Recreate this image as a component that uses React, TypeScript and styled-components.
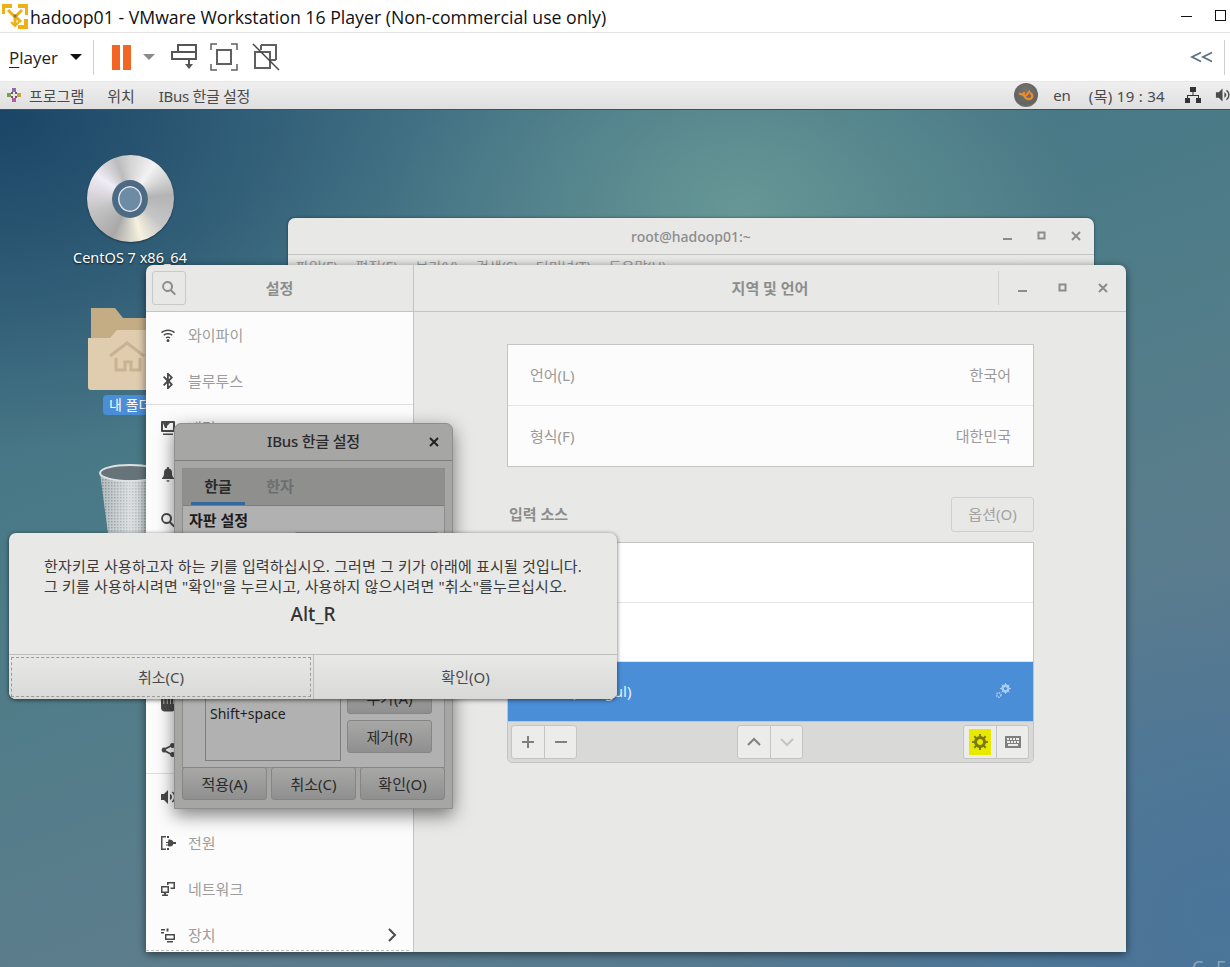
import React from 'react';
import styled, { createGlobalStyle } from 'styled-components';

const GlobalStyle = createGlobalStyle`
  html, body { margin: 0; padding: 0; background: #fff; }
  * { box-sizing: border-box; }
  body { font-family: "Noto Sans", "Noto Sans CJK KR", sans-serif; font-size: 15px; }
`;

const Page = styled.div`
  width: 1230px;
  height: 967px;
  display: flex;
  flex-direction: column;
  overflow: hidden;
`;

/* vmware player chrome */
const TitleBar = styled.div`
  height: 33px;
  flex: none;
  display: flex;
  align-items: center;
  background: #fff;
  border-bottom: 1px solid #e3e3e3;
  padding: 0 3px 0 2px;
  color: #101010;
`;
const TitleText = styled.span`
  font-family: "Open Sans", "Noto Sans", sans-serif;
  font-size: 17.7px;
  margin-left: 2px;
  padding-top: 1px;
  flex: 1;
  white-space: nowrap;
`;
const Toolbar = styled.div`
  height: 49px;
  flex: none;
  display: flex;
  align-items: center;
  background: #fff;
  padding-left: 9px;
  border-bottom: 1px solid #e6e6e6;
`;
const PlayerMenu = styled.span`
  font-family: "Open Sans", "Noto Sans", sans-serif;
  font-size: 17px;
  color: #222;
  width: 60px;
  u { text-underline-offset: 3px; text-decoration-thickness: 1px; }
`;
const ToolSep = styled.span<{ $ml: number }>`
  width: 1px;
  height: 35px;
  background: #cfcfcf;
  margin-left: ${(p) => p.$ml}px;
`;
const Caret = styled.span<{ $color: string; $ml: number }>`
  width: 0;
  height: 0;
  border-left: 6px solid transparent;
  border-right: 6px solid transparent;
  border-top: 6px solid ${(p) => p.$color};
  margin-left: ${(p) => p.$ml}px;
`;
const PauseBars = styled.span`
  display: flex;
  gap: 3px;
  margin-left: 18px;
  i { width: 8px; height: 25px; background: #f26522; display: block; }
`;
const ToolIcon = styled.svg<{ $ml: number }>`
  margin-left: ${(p) => p.$ml}px;
  flex: none;
`;
const ToolSpacer = styled.span`
  flex: 1;
`;
const ToolEnd = styled.span`
  width: 5px;
  flex: none;
`;

const GuestPanel = styled.div`
  height: 28px;
  flex: none;
  display: flex;
  align-items: center;
  padding: 0 0 1px 6px;
  background: linear-gradient(#efefef, #dfdfdf);
  border-bottom: 1px solid #4c4c4c;
  font-size: 15px;
  color: #4a4a4a;
  white-space: nowrap;
`;
const PanelItem = styled.span<{ $ml: number; $track?: number }>`
  margin-left: ${(p) => p.$ml}px;
  letter-spacing: ${(p) => p.$track ?? 0}px;
  flex: none;
  display: flex;
`;
const SoundClip = styled(PanelItem)`
  width: 15px;
  overflow: hidden;
`;
const PanelGrow = styled.span`
  flex: 1;
`;
const PanelBadge = styled.span`
  width: 24px;
  height: 24px;
  border-radius: 50%;
  background: radial-gradient(circle at 50% 35%, #77736d 0, #636360 65%, #8a8a88 100%);
  display: flex;
  align-items: center;
  justify-content: center;
  flex: none;
`;

/* guest desktop */
const Desktop = styled.div`
  flex: 1;
  position: relative;
  overflow: hidden;
  background:
    radial-gradient(ellipse 340px 260px at 740px 100px, rgba(104, 153, 150, 0.95), rgba(104, 153, 150, 0) 100%),
    radial-gradient(ellipse 420px 340px at 0px 0px, #1b4566 0%, rgba(27, 69, 102, 0) 100%),
    radial-gradient(ellipse 500px 400px at 1230px 800px, #4a7499, rgba(74, 116, 153, 0) 100%),
    linear-gradient(160deg, #3c6b82 0%, #4d7c88 40%, #5d7d8c 70%, #4f7793 100%);
`;
const DesktopIcons = styled.div`
  width: 130px;
  margin-left: 65px;
  padding-top: 45px;
  display: flex;
  flex-direction: column;
  align-items: center;
`;
const Disc = styled.div`
  width: 87px;
  height: 87px;
  border-radius: 50%;
  background: conic-gradient(#d4d4d4 0deg, #f3f3f3 35deg, #b4b4b4 85deg, #c6c6c6 130deg, #f6f1df 165deg, #a9a9a9 205deg, #c2c2c2 250deg, #f1ecf6 305deg, #bcbcbc 340deg, #d4d4d4 360deg);
  display: flex;
  align-items: center;
  justify-content: center;
  box-shadow: 0 1px 2px rgba(0, 0, 0, 0.4);
`;
const DiscHub = styled.div`
  width: 36px;
  height: 36px;
  border-radius: 50%;
  background: #e9e9e9;
  display: flex;
  align-items: center;
  justify-content: center;
  &::before {
    content: '';
    display: block;
    width: 26px;
    height: 26px;
    border-radius: 50%;
    border: 6px solid #4d6a84;
    background: #6d8ba5;
    box-shadow: inset 0 0 0 1.5px #dfe6ec;
  }
`;
const IconLabel = styled.div`
  color: #fff;
  font-size: 14.5px;
  line-height: 20px;
  margin-top: 5px;
  text-shadow: 0 1px 2px rgba(0, 0, 0, 0.8);
  white-space: nowrap;
`;
const FolderIcon = styled.svg`
  margin-top: 41px;
  align-self: flex-start;
  margin-left: 23px;
`;
const FolderLabel = styled.div`
  align-self: flex-start;
  margin: 5px 0 0 38px;
  padding: 0 6px;
  width: 90px;
  height: 20px;
  border-radius: 4px;
  background: #4a8ed8;
  color: #fff;
  font-size: 14px;
  line-height: 20px;
`;
const TrashIcon = styled.svg`
  margin-top: 49px;
  align-self: flex-start;
  margin-left: 34px;
`;
const CornerText = styled.div`
  position: absolute;
  left: 1192px;
  top: 845px;
  font-size: 18px;
  line-height: 24px;
  letter-spacing: 4px;
  color: rgba(255, 255, 255, 0.35);
  white-space: nowrap;
`;

/* terminal behind everything */
const TerminalWindow = styled.div`
  position: absolute;
  left: 288px;
  top: 108px;
  width: 806px;
  height: 70px;
  background: #e8e8e7;
  border-radius: 7px 7px 0 0;
  box-shadow: 0 0 3px rgba(0, 0, 0, 0.5);
`;
const TerminalHead = styled.div`
  height: 37px;
  display: flex;
  align-items: center;
  justify-content: flex-end;
  position: relative;
  border-bottom: 1px solid #c4c4c2;
  padding-right: 13px;
  color: #8c8c8c;
  font-size: 14px;
`;
const TerminalTitle = styled.span`
  position: absolute;
  left: 0;
  right: 0;
  text-align: center;
  font-weight: 500;
`;
const TerminalMenu = styled.div`
  display: flex;
  gap: 18px;
  padding: 3px 0 0 8px;
  font-size: 14px;
  line-height: 18px;
  color: #9a9a9a;
  background: linear-gradient(#e8e8e7, #dcdcdb);
  height: 33px;
`;
const WindowButtons = styled.div<{ $gap: number }>`
  display: flex;
  align-items: center;
  gap: ${(p) => p.$gap}px;
  position: relative;
`;

/* settings window */
const SettingsWindow = styled.div`
  position: absolute;
  left: 146px;
  top: 155px;
  width: 980px;
  height: 687px;
  display: grid;
  grid-template-columns: 268px 1fr;
  grid-template-rows: 47px 1fr;
  background: #e8e8e7;
  border-radius: 7px 7px 0 0;
  box-shadow: 0 2px 8px rgba(0, 0, 0, 0.55);
  overflow: hidden;
`;
const SideHead = styled.div`
  display: flex;
  align-items: center;
  padding-left: 6px;
  border-right: 1px solid #c4c4c2;
  border-bottom: 1px solid #c4c4c2;
  position: relative;
`;
const SearchToggle = styled.div`
  width: 34px;
  height: 34px;
  border: 1px solid #c9c9c7;
  border-radius: 3px;
  display: flex;
  align-items: center;
  justify-content: center;
`;
const SideTitle = styled.div`
  position: absolute;
  left: 0;
  right: 0;
  text-align: center;
  font-weight: 700;
  color: #8c8c8c;
  padding-bottom: 2px;
`;
const MainHead = styled.div`
  display: flex;
  align-items: center;
  border-bottom: 1px solid #c4c4c2;
  position: relative;
  justify-content: flex-end;
`;
const HeadControls = styled.div`
  height: 34px;
  display: flex;
  align-items: center;
  border-left: 1px solid #d0d0ce;
  padding: 0 18px 0 19px;
  position: relative;
`;
const Sidebar = styled.div`
  background: #fcfcfc;
  border-right: 1px solid #c4c4c2;
  position: relative;
  overflow: hidden;
`;
const SideGroup = styled.div`
  border-bottom: 1px solid #dedede;
`;
const SideRow = styled.div`
  height: 46px;
  display: flex;
  align-items: center;
  padding: 0 0 1px 14px;
  gap: 12px;
  color: #9d9d9d;
`;
const SideIcon = styled.span`
  width: 16px;
  height: 16px;
  display: flex;
  flex: none;
`;
const SideArrow = styled.span`
  margin-left: auto;
  margin-right: 16px;
  display: flex;
`;
const DashedEdge = styled.div`
  position: absolute;
  left: 0;
  right: 4px;
  bottom: 1px;
  border-bottom: 1px dashed #bdbdbd;
`;
const MainPane = styled.div`
  padding: 32px 92px 0 93px;
  display: flex;
  flex-direction: column;
`;
const ListBox = styled.div`
  background: #fcfcfc;
  border: 1px solid #c4c4c2;
`;
const InfoRow = styled.div`
  height: 60px;
  display: flex;
  align-items: center;
  justify-content: space-between;
  padding: 0 22px 2px;
  color: #9a9a9a;
  & + & { border-top: 1px solid #e4e4e4; height: 61px; }
`;
const SourceHead = styled.div`
  margin-top: 29px;
  height: 36px;
  display: flex;
  align-items: center;
  justify-content: space-between;
  padding-left: 2px;
  font-weight: 700;
  color: #8c8c8c;
`;
const OptionButton = styled.div`
  width: 83px;
  height: 35px;
  border: 1px solid #cfcfcd;
  border-radius: 3px;
  display: flex;
  align-items: center;
  justify-content: center;
  padding-bottom: 2px;
  font-weight: 400;
  color: #a3a3a3;
`;
const SourceLabel = styled.span`
  padding-bottom: 2px;
`;
const SourceBox = styled.div`
  margin-top: 10px;
  border: 1px solid #c4c4c2;
  border-radius: 0 0 5px 5px;
  overflow: hidden;
`;
const SourceRow = styled.div<{ $active?: boolean }>`
  height: ${(p) => (p.$active ? 60 : 59)}px;
  display: flex;
  align-items: center;
  justify-content: space-between;
  padding: 0 22px 2px 18px;
  background: ${(p) => (p.$active ? '#4a8ed8' : '#fff')};
  color: ${(p) => (p.$active ? '#e6f0fa' : '#9a9a9a')};
  & + & { border-top: 1px solid #e4e4e4; }
`;
const SourceTools = styled.div`
  height: 41px;
  display: flex;
  align-items: center;
  justify-content: space-between;
  padding: 0 4px 0 3px;
  background: #d9d9d7;
  border-top: 1px solid #c4c4c2;
`;
const ToolGroup = styled.div`
  display: flex;
  height: 34px;
  border: 1px solid #c4c4c2;
  border-radius: 3px;
  background: #ececeb;
  overflow: hidden;
`;
const ToolCell = styled.div`
  width: 32px;
  display: flex;
  align-items: center;
  justify-content: center;
  color: #8a8a8a;
  & + & { border-left: 1px solid #c4c4c2; }
`;
const Highlight = styled.span`
  width: 22px;
  height: 26px;
  margin-right: 1px;
  background: #e9e900;
  display: flex;
  align-items: center;
  justify-content: center;
`;

/* ibus setup, dimmed behind the key dialog */
const ImeDialog = styled.div`
  position: absolute;
  left: 174px;
  top: 313px;
  width: 279px;
  height: 386px;
  background: #a6a6a5;
  border: 1px solid #8e8e8e;
  border-radius: 7px 7px 0 0;
  box-shadow: 0 6px 18px rgba(0, 0, 0, 0.5);
  padding-bottom: 8px;
  display: flex;
  flex-direction: column;
  color: #1c1c1c;
`;
const ImeHead = styled.div`
  height: 37px;
  flex: none;
  display: flex;
  align-items: center;
  justify-content: center;
  position: relative;
  font-weight: 500;
  padding-bottom: 3px;
  letter-spacing: -0.2px;
  border-bottom: 1px solid #7d7d7d;
  color: #2a2a2a;
`;
const ImeClose = styled.svg`
  position: absolute;
  right: 13px;
  top: 13px;
`;
const Notebook = styled.div`
  margin: 7px 7px 0;
  flex: 1;
  display: flex;
  flex-direction: column;
  border: 1px solid #8c8c8c;
  background: #b1b1b1;
`;
const TabStrip = styled.div`
  height: 37px;
  flex: none;
  display: flex;
  background: #8f8f8e;
  border-bottom: 1px solid #7d7d7d;
  padding-left: 8px;
`;
const Tab = styled.div<{ $active?: boolean }>`
  width: 54px;
  margin-right: 8px;
  display: flex;
  align-items: center;
  justify-content: center;
  font-weight: 700;
  color: ${(p) => (p.$active ? '#2a2a2a' : '#6e6e6e')};
  border-bottom: 3px solid ${(p) => (p.$active ? '#33689f' : 'transparent')};
`;
const TabBody = styled.div`
  flex: 1;
  display: flex;
  flex-direction: column;
  justify-content: space-between;
  padding: 3px 6px 6px 6px;
`;
const SectionTitle = styled.div`
  font-weight: 700;
  line-height: 22px;
`;
const ComboStub = styled.div`
  width: 145px;
  height: 30px;
  margin: 1px 0 0 105px;
  border: 1px solid #858585;
  border-radius: 3px;
`;
const KeySection = styled.div`
  display: grid;
  grid-template-columns: 136px 85px;
  column-gap: 6px;
  padding-left: 16px;
`;
const KeyList = styled.div`
  height: 79px;
  border: 1px solid #7d7d7d;
  padding: 21px 4px 0;
  font-size: 14px;
  line-height: 20px;
  color: #1c1c1c;
`;
const KeyButtons = styled.div`
  display: flex;
  flex-direction: column;
  gap: 6px;
  margin-top: -1px;
`;
const GrayButton = styled.div`
  height: 33px;
  flex: 1 0 33px;
  display: flex;
  align-items: center;
  justify-content: center;
  border: 1px solid #858585;
  border-radius: 3px;
  background: linear-gradient(#a8a8a7, #8f8f8f);
  color: #2a2a2a;
  padding-bottom: 1px;
`;
const KeyButton = styled(GrayButton)`
  flex: none;
`;
const ImeActions = styled.div`
  margin: -1px 7px 0;
  display: flex;
  gap: 4px;
  flex: none;
`;

/* key grab dialog on top */
const KeyDialog = styled.div`
  position: absolute;
  left: 9px;
  top: 423px;
  width: 608px;
  height: 166px;
  background: #e8e8e7;
  border-radius: 7px;
  box-shadow: 0 1px 4px rgba(0, 0, 0, 0.6);
  display: flex;
  flex-direction: column;
  overflow: hidden;
`;
const KeyBody = styled.div`
  flex: 1;
  padding-top: 23px;
  color: #3a3a3a;
`;
const KeyMessage = styled.div`
  padding-left: 35px;
  line-height: 20px;
  letter-spacing: 0.17px;
  white-space: nowrap;
`;
const KeyName = styled.div`
  margin-top: 6px;
  text-align: center;
  font-size: 19px;
  font-weight: 500;
  line-height: 24px;
  color: #333;
`;
const KeyActions = styled.div`
  height: 45px;
  flex: none;
  display: grid;
  grid-template-columns: 304px 1fr;
  border-top: 1px solid #bdbdbb;
  background: linear-gradient(#e8e8e7, #d9d9d7);
  color: #4a4a4a;
`;
const KeyAction = styled.div<{ $focus?: boolean }>`
  display: flex;
  align-items: center;
  justify-content: center;
  position: relative;
  padding-bottom: 2px;
  & + & { border-left: 1px solid #bdbdbb; }
  ${(p) => p.$focus && `
    &::after {
      content: '';
      position: absolute;
      inset: 2px;
      border: 1px dashed #9a9a9a;
    }
  `}
`;

const Gnome = ({ d, size = 16 }: { d: string; size?: number }) => (
  <svg width={size} height={size} viewBox="0 0 16 16" fill="#4a4a4a">
    <path d={d} />
  </svg>
);

const MinMaxClose = ({ gap }: { gap: number }) => (
  <WindowButtons $gap={gap}>
    <svg width="10" height="10" viewBox="0 0 10 10"><rect x="0" y="7" width="9" height="2" fill="#8c8c8c" /></svg>
    <svg width="10" height="10" viewBox="0 0 10 10"><rect x="1.5" y="1.5" width="6" height="6" fill="none" stroke="#8c8c8c" strokeWidth="2" /></svg>
    <svg width="10" height="10" viewBox="0 0 10 10"><path d="M1 1l8 8M9 1l-8 8" stroke="#8c8c8c" strokeWidth="2" /></svg>
  </WindowButtons>
);

const icons = {
  wifi: 'M8 2.500c2.700 0 5.100 1 7 2.600l-1 1.100C12.400 4.900 10.300 4 8 4S3.600 4.900 2 6.200L1 5.100C2.900 3.500 5.300 2.500 8 2.500zM8 6c1.800 0 3.400.6 4.700 1.700l-1 1.100C10.700 8 9.400 7.500 8 7.500S5.300 8 4.300 8.800l-1-1.100C4.600 6.600 6.200 6 8 6zM8 9.500c.9 0 1.700.3 2.400.8l-1 1.100c-.4-.3-.9-.4-1.400-.4s-1 .1-1.400.4l-1-1.100c.7-.5 1.500-.8 2.400-.8zM8 12a1.500 1.500 0 1 1 0 3 1.500 1.500 0 0 1 0-3z',
  bluetooth: 'M7 0h1.500L13 4.500 9.800 8l3.200 3.500L8.500 16H7v-5.500L4.200 13 3 11.800 6.600 8 3 4.200 4.200 3 7 5.500zM8.800 2.800v3.400L10.500 4.500zM8.800 9.800v3.400l1.700-1.700z',
  display: 'M2 1h12a1 1 0 0 1 1 1v9a1 1 0 0 1-1 1H2a1 1 0 0 1-1-1V2a1 1 0 0 1 1-1zm1 2v7h10V3h-3L7 6v2H5zM3 13.500h10V15H3z',
  bell: 'M8 1c.6 0 1 .4 1 1v.5c2 .5 3 2 3 4.500 0 2.500.5 4 2 5v1H2v-1c1.500-1 2-2.500 2-5 0-2.500 1-4 3-4.500V2c0-.6.4-1 1-1zM6.500 14.200h3a1.500 1.500 0 0 1-3 0z',
  search: 'M6.500 1a5.500 5.500 0 0 1 4.400 8.800l4.100 4.100-1.400 1.400-4.100-4.100A5.500 5.500 0 1 1 6.500 1zm0 2a3.500 3.500 0 1 0 0 7 3.500 3.500 0 0 0 0-7z',
  hand: 'M1 2h2.500v6h.7V0h2.600v8h.7V0h2.600v8h.7V1h2.600v7h1.800v4c0 2-1.500 3.500-3.500 3.500H5c-2.500 0-4-1.500-4-4z',
  share: 'M12.500 1a2.500 2.500 0 1 1-1.900 4.100L6 7.400a2.500 2.500 0 0 1 0 1.200l4.600 2.300A2.500 2.500 0 1 1 10 12.500l-4.700-2.300a2.500 2.500 0 1 1 0-4.400L10 3.500A2.500 2.500 0 0 1 12.500 1z',
  sound: 'M1 5h3l4-4v14l-4-4H1zM10 5c1.300.7 2 1.700 2 3s-.7 2.300-2 3zM12.500 2.500C14.400 3.800 15.500 5.700 15.500 8s-1.100 4.200-3 5.500l-.7-1.100C13.200 11.400 14 9.800 14 8s-.8-3.400-2.200-4.400z',
  power: 'M1 1h5v1.500H2.500v11H6V15H1zM7 1h2v2H7zM10 4.500a3.500 3.500 0 0 1 3.400 2.500H16v2h-2.600A3.500 3.500 0 0 1 10 11.500H8.500l-.5-1H6v-1h2V8H6V7h2l.5-2.500zM7 13h2v2H7z',
  network: 'M1 5h8v7H6v1.500h2V15H2v-1.500h2V12H1zm1.500 1.500v4h5v-4zM7 1h8v7h-4.500V6.500H13.500V2.500h-5V4H7z',
  devices: 'M1 2h4v1.500H1zM1 5h3v1.500H1zM6.500 1.500h2v3h-2zM5 7h10v6H5zm1.500 1.500v3h7v-3zM7 14h6v1.500H7z',
};

export default function App() {
  return (
    <>
      <GlobalStyle />
      <Page>
        <TitleBar>
          <svg width="26" height="26" viewBox="0 0 26 26" fill="none">
            <path d="M1 11V3h9M16 3h9v9M24 16v8h-8" stroke="#efb014" strokeWidth="4" />
            <path d="M6 7l6 6M20 7l-6 6M19 19l-6-6" stroke="#efb014" strokeWidth="3" />
            <path d="M13 13v9" stroke="#efb014" strokeWidth="3" />
            <path d="M9 19l4 4 4-4" stroke="#efb014" strokeWidth="2" />
            <rect x="11.500" y="11.500" width="3" height="3" fill="#8a7440" />
          </svg>
          <TitleText>hadoop01 - VMware Workstation 16 Player (Non-commercial use only)</TitleText>
          <svg width="46" height="14" viewBox="0 0 46 14">
            <rect x="0" y="7" width="11" height="1" fill="#111" />
            <rect x="34.500" y="1.500" width="10" height="10" fill="none" stroke="#111" />
          </svg>
        </TitleBar>
        <Toolbar>
          <PlayerMenu><u>P</u>layer</PlayerMenu>
          <Caret $color="#111" $ml={1} />
          <ToolSep $ml={11} />
          <PauseBars><i /><i /></PauseBars>
          <Caret $color="#8a8a8a" $ml={12} />
          <ToolIcon $ml={16} width="26" height="26" viewBox="0 0 26 26" fill="none" stroke="#555" strokeWidth="2">
            <rect x="7" y="1" width="18" height="7" />
            <rect x="1" y="8" width="24" height="7" />
            <path d="M18 15v6" />
            <path d="M14 20l4 5 4-5z" fill="#555" stroke="none" />
          </ToolIcon>
          <ToolIcon $ml={13} width="28" height="28" viewBox="0 0 28 28" fill="none" stroke="#606060" strokeWidth="1.500">
            <path d="M1 7V1h6M21 1h6v6M27 21v6h-6M7 27H1v-6" />
            <rect x="7" y="7" width="14" height="14" strokeWidth="2" />
          </ToolIcon>
          <ToolIcon $ml={14} width="28" height="28" viewBox="0 0 28 28" fill="none" stroke="#606060" strokeWidth="2">
            <path d="M9 2h15v15M9 2v5M24 17h-5M3 9h15v16H3z" />
            <path d="M1 1l26 26" stroke="#444" strokeWidth="1.500" />
          </ToolIcon>
          <ToolSpacer />
          <svg width="24" height="12" viewBox="0 0 24 12" fill="none" stroke="#5c6f80" strokeWidth="1.800">
            <path d="M11 1.500L2 6l9 4.500M22 1.500L13 6l9 4.500" />
          </svg>
          <ToolSep $ml={10} />
          <ToolEnd />
        </Toolbar>
        <GuestPanel>
          <svg width="16" height="16" viewBox="0 0 16 16">
            <rect x="6" y="1" width="4" height="4" fill="#8a6fb0" />
            <rect x="11" y="6" width="4" height="4" fill="#c9a23c" />
            <rect x="6" y="11" width="4" height="4" fill="#b85a9a" />
            <rect x="1" y="6" width="4" height="4" fill="#7fa04a" />
            <path d="M5 5h2v2H5zM9 5h2v2H9zM5 9h2v2H5zM9 9h2v2H9z" fill="#6c5a78" />
          </svg>
          <PanelItem $ml={7}>프로그램</PanelItem>
          <PanelItem $ml={23}>위치</PanelItem>
          <PanelItem $ml={24} $track={-0.3}>IBus 한글 설정</PanelItem>
          <PanelGrow />
          <PanelBadge>
            <svg width="17" height="14" viewBox="0 0 17 14" fill="none" stroke="#ee8a2a" strokeWidth="2.200">
              <path d="M1 6c3-1 4 2 6 2s3-4 5-5M6 4c-1 4 2 8 6 7 3-1 3-5 0-6" />
            </svg>
          </PanelBadge>
          <PanelItem $ml={15}>en</PanelItem>
          <PanelItem $ml={18} $track={0.3}>(목) 19 : 34</PanelItem>
          <PanelItem $ml={20}>
            <svg width="16" height="16" viewBox="0 0 16 16" fill="#333">
              <rect x="5" y="0" width="6" height="5" />
              <rect x="0" y="11" width="5" height="5" />
              <rect x="11" y="11" width="5" height="5" />
              <path d="M7.500 5h1v3h5.500v3h-1V9H3v2H2V8h5.500z" />
            </svg>
          </PanelItem>
          <SoundClip $ml={14}>
            <Gnome d={icons.sound} />
          </SoundClip>
        </GuestPanel>
        <Desktop>
          <DesktopIcons>
            <Disc><DiscHub /></Disc>
            <IconLabel>CentOS 7 x86_64</IconLabel>
            <FolderIcon width="84" height="82" viewBox="0 0 84 82">
              <path d="M3 0h24l8 10h49v40H3z" fill="#c4ad85" />
              <path d="M0 30h22l7-8h55v60H3q-3 0-3-3z" fill="#e0cdb0" />
              <path d="M22 48l17-13 17 13M28 50v12h9v-8h6v8h9V50" fill="none" stroke="#c7b291" strokeWidth="3" />
            </FolderIcon>
            <FolderLabel>내 폴더</FolderLabel>
            <TrashIcon width="62" height="72" viewBox="0 0 62 72">
              <defs>
                <pattern id="mesh" width="3" height="3" patternUnits="userSpaceOnUse">
                  <rect width="3" height="3" fill="#b4bcbe" />
                  <rect width="1.500" height="1.500" fill="#7e8b90" />
                </pattern>
                <linearGradient id="shine" x1="0" x2="1">
                  <stop offset="0" stopColor="#fff" stopOpacity="0" />
                  <stop offset="0.5" stopColor="#fff" stopOpacity="0.55" />
                  <stop offset="1" stopColor="#fff" stopOpacity="0" />
                </linearGradient>
              </defs>
              <path d="M1 9l8 60h44l8-60z" fill="url(#mesh)" />
              <path d="M1 9l8 60h44l8-60z" fill="url(#shine)" />
              <ellipse cx="31" cy="9" rx="30" ry="8" fill="#66747a" stroke="#dde1e1" strokeWidth="2" />
            </TrashIcon>
          </DesktopIcons>
          <CornerText>C F</CornerText>

          <TerminalWindow>
            <TerminalHead>
              <TerminalTitle>root@hadoop01:~</TerminalTitle>
              <MinMaxClose gap={24} />
            </TerminalHead>
            <TerminalMenu>
              <span>파일(F)</span><span>편집(E)</span><span>보기(V)</span><span>검색(S)</span><span>터미널(T)</span><span>도움말(H)</span>
            </TerminalMenu>
          </TerminalWindow>

          <SettingsWindow>
            <SideHead>
              <SearchToggle><svg width="16" height="16" viewBox="0 0 16 16" fill="#8c8c8c"><path d={icons.search} /></svg></SearchToggle>
              <SideTitle>설정</SideTitle>
            </SideHead>
            <MainHead>
              <SideTitle>지역 및 언어</SideTitle>
              <HeadControls>
                <MinMaxClose gap={30} />
              </HeadControls>
            </MainHead>
            <Sidebar>
              <SideGroup>
                <SideRow><SideIcon><Gnome d={icons.wifi} /></SideIcon>와이파이</SideRow>
                <SideRow><SideIcon><Gnome d={icons.bluetooth} /></SideIcon>블루투스</SideRow>
              </SideGroup>
              <SideGroup>
                <SideRow><SideIcon><Gnome d={icons.display} /></SideIcon>배경</SideRow>
                <SideRow><SideIcon><Gnome d={icons.bell} /></SideIcon>알림</SideRow>
                <SideRow><SideIcon><Gnome d={icons.search} /></SideIcon>검색</SideRow>
                <SideRow>지역 및 언어</SideRow>
                <SideRow>유니버설 액세스</SideRow>
                <SideRow>온라인 계정</SideRow>
                <SideRow><SideIcon><Gnome d={icons.hand} /></SideIcon>개인 정보</SideRow>
                <SideRow><SideIcon><Gnome d={icons.share} /></SideIcon>공유</SideRow>
              </SideGroup>
              <SideRow><SideIcon><Gnome d={icons.sound} /></SideIcon>소리</SideRow>
              <SideRow><SideIcon><Gnome d={icons.power} /></SideIcon>전원</SideRow>
              <SideRow><SideIcon><Gnome d={icons.network} /></SideIcon>네트워크</SideRow>
              <SideRow>
                <SideIcon><Gnome d={icons.devices} /></SideIcon>장치
                <SideArrow>
                  <svg width="10" height="14" viewBox="0 0 10 14" fill="none" stroke="#4a4a4a" strokeWidth="2"><path d="M2 1l6 6-6 6" /></svg>
                </SideArrow>
              </SideRow>
              <DashedEdge />
            </Sidebar>
            <MainPane>
              <ListBox>
                <InfoRow><span>언어(L)</span><span>한국어</span></InfoRow>
                <InfoRow><span>형식(F)</span><span>대한민국</span></InfoRow>
              </ListBox>
              <SourceHead>
                <SourceLabel>입력 소스</SourceLabel>
                <OptionButton>옵션(O)</OptionButton>
              </SourceHead>
              <SourceBox>
                <SourceRow>한국어</SourceRow>
                <SourceRow>영어 (미국)</SourceRow>
                <SourceRow $active>
                  <span>한국어 (Hangul)</span>
                  <svg width="16" height="16" viewBox="0 0 16 16" fill="none" stroke="#a9cbef">
                    <circle cx="10.500" cy="5.500" r="3" strokeWidth="2.400" />
                    <path d="M10.500 0v11M5 5.500h11M6.600 1.600l7.800 7.800M14.400 1.600l-7.800 7.800" strokeWidth="1" />
                    <circle cx="10.500" cy="5.500" r="1.600" fill="#4a8ed8" stroke="none" />
                    <circle cx="3.800" cy="12" r="2.200" strokeWidth="1.600" strokeDasharray="1.500 0.800" />
                  </svg>
                </SourceRow>
                <SourceTools>
                  <ToolGroup>
                    <ToolCell>
                      <svg width="12" height="12" viewBox="0 0 12 12"><path d="M5 0h2v5h5v2H7v5H5V7H0V5h5z" fill="#808080" /></svg>
                    </ToolCell>
                    <ToolCell>
                      <svg width="12" height="12" viewBox="0 0 12 12"><rect x="0" y="5" width="12" height="2" fill="#808080" /></svg>
                    </ToolCell>
                  </ToolGroup>
                  <ToolGroup>
                    <ToolCell>
                      <svg width="14" height="10" viewBox="0 0 14 10" fill="none" stroke="#808080" strokeWidth="2"><path d="M1 8l6-6 6 6" /></svg>
                    </ToolCell>
                    <ToolCell>
                      <svg width="14" height="10" viewBox="0 0 14 10" fill="none" stroke="#c4c4c4" strokeWidth="2"><path d="M1 2l6 6 6-6" /></svg>
                    </ToolCell>
                  </ToolGroup>
                  <ToolGroup>
                    <ToolCell>
                      <Highlight>
                        <svg width="16" height="16" viewBox="0 0 16 16">
                          <circle cx="8" cy="8" r="4.500" fill="none" stroke="#7a7a10" strokeWidth="3" />
                          <path d="M8 0v3M8 13v3M0 8h3M13 8h3M2.300 2.300l2.100 2.100M11.600 11.600l2.100 2.100M13.700 2.300l-2.100 2.100M4.400 11.600l-2.100 2.100" stroke="#7a7a10" strokeWidth="2" />
                        </svg>
                      </Highlight>
                    </ToolCell>
                    <ToolCell>
                      <svg width="16" height="12" viewBox="0 0 16 12">
                        <path d="M0 0h16v12H0zM2 2v2h2V2zM5 2v2h2V2zM8 2v2h2V2zM11 2v2h3V2zM2 5v2h3V5zM6 5v2h2V5zM9 5v2h2V5zM12 5v2h2V5zM3 8v2h10V8z" fill="#808080" fillRule="evenodd" />
                      </svg>
                    </ToolCell>
                  </ToolGroup>
                </SourceTools>
              </SourceBox>
            </MainPane>
          </SettingsWindow>

          <ImeDialog>
            <ImeHead>
              IBus 한글 설정
              <ImeClose width="10" height="10" viewBox="0 0 10 10"><path d="M1 1l8 8M9 1l-8 8" stroke="#222" strokeWidth="2" /></ImeClose>
            </ImeHead>
            <Notebook>
              <TabStrip>
                <Tab $active>한글</Tab>
                <Tab>한자</Tab>
              </TabStrip>
              <TabBody>
                <div>
                  <SectionTitle>자판 설정</SectionTitle>
                  <ComboStub />
                </div>
                <KeySection>
                  <KeyList>Shift+space</KeyList>
                  <KeyButtons>
                    <KeyButton>추가(A)</KeyButton>
                    <KeyButton>제거(R)</KeyButton>
                  </KeyButtons>
                </KeySection>
              </TabBody>
            </Notebook>
            <ImeActions>
              <GrayButton>적용(A)</GrayButton>
              <GrayButton>취소(C)</GrayButton>
              <GrayButton>확인(O)</GrayButton>
            </ImeActions>
          </ImeDialog>

          <KeyDialog>
            <KeyBody>
              <KeyMessage>
                한자키로 사용하고자 하는 키를 입력하십시오. 그러면 그 키가 아래에 표시될 것입니다.<br />
                그 키를 사용하시려면 "확인"을 누르시고, 사용하지 않으시려면 "취소"를누르십시오.
              </KeyMessage>
              <KeyName>Alt_R</KeyName>
            </KeyBody>
            <KeyActions>
              <KeyAction $focus>취소(C)</KeyAction>
              <KeyAction>확인(O)</KeyAction>
            </KeyActions>
          </KeyDialog>
        </Desktop>
      </Page>
    </>
  );
}
